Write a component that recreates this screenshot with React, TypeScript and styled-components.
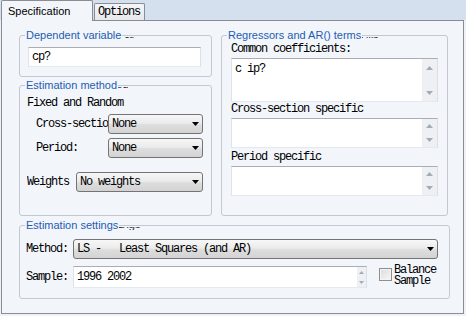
import React from 'react';
import styled, { createGlobalStyle } from 'styled-components';

const MONO = `"Liberation Mono", "Courier New", monospace`;
const SANS = `"Liberation Sans", Arial, sans-serif`;
const PANEL = '#F2F5FA';

const Global = createGlobalStyle`
  html, body { margin: 0; padding: 0; }
  body { width: 466px; height: 316px; overflow: hidden; background: #EEF1F6; }
`;

const Root = styled.div`
  width: 466px;
  height: 316px;
  background: #EEF1F6;
  display: flex;
  flex-direction: column;
`;

const TabBar = styled.div`
  height: 20px;
  background: #D5E0EF;
  display: flex;
  align-items: flex-end;
  position: relative;
  z-index: 2;
`;

const Tab = styled.div<{ $active?: boolean }>`
  box-sizing: border-box;
  border: 1px solid #898C95;
  border-bottom: none;
  border-radius: 2px 2px 0 0;
  white-space: nowrap;
  margin-left: 1px;
  color: #000;
  ${(p) =>
    p.$active
      ? `
    width: 92px;
    height: 21px;
    margin-bottom: -1px;
    background: ${PANEL};
    padding: 2px 0 0 6px;
    font: 11px/16px ${SANS};
  `
      : `
    width: 51px;
    height: 17px;
    background: linear-gradient(#F4F5F7, #E6E8EC);
    padding: 1px 0 0 3px;
    font: 12px/14px ${MONO};
    letter-spacing: -1.2px;
  `}
`;

const Panel = styled.div`
  box-sizing: border-box;
  margin-left: 1px;
  width: 463px;
  height: 294px;
  border: 1px solid #898C95;
  background: ${PANEL};
  padding: 14px 0 0 17px;
  display: flex;
  flex-direction: column;
  gap: 9px;
`;

const TopRow = styled.div`
  display: flex;
  gap: 9px;
  height: 181px;
`;

const Column = styled.div`
  display: flex;
  flex-direction: column;
  gap: 8px;
`;

const Group = styled.div<{ $w: number; $h: number; $pad: string }>`
  position: relative;
  box-sizing: border-box;
  width: ${(p) => p.$w}px;
  height: ${(p) => p.$h}px;
  flex: none;
  border: 1px solid #C3C8D1;
  border-radius: 3px;
  padding: ${(p) => p.$pad};
  display: flex;
  flex-direction: column;
`;

const Legend = styled.div`
  position: absolute;
  top: -8px;
  left: 5px;
  height: 14px;
  font: 11px/14px ${SANS};
`;

const LegendText = styled.div`
  position: relative;
  z-index: 1;
  padding: 0 1px;
  background: ${PANEL};
  font: 11px/14px ${SANS};
  color: #1E5CB3;
  white-space: nowrap;
`;

const LegendGhost = styled.div`
  position: absolute;
  left: 1px;
  top: 0;
  font: 12px/14px ${MONO};
  letter-spacing: -1.2px;
  color: #3A3A3A;
  white-space: nowrap;
  clip-path: inset(9px 0 2px 0);
`;

const Text = styled.div<{ $mt?: number; $lh?: number; $ml?: number }>`
  font: 12px/${(p) => p.$lh ?? 14}px ${MONO};
  letter-spacing: -1.2px;
  color: #000;
  white-space: pre;
  margin-top: ${(p) => p.$mt ?? 0}px;
  margin-left: ${(p) => p.$ml ?? 0}px;
`;

const FieldRow = styled.div<{ $indent?: number; $mt?: number; $align?: string }>`
  display: flex;
  align-items: ${(p) => p.$align ?? 'center'};
  min-height: 20px;
  padding-left: ${(p) => p.$indent ?? 0}px;
  margin-top: ${(p) => p.$mt ?? 0}px;
`;

const FieldLabel = styled.div<{ $w: number; $mt?: number }>`
  width: ${(p) => p.$w}px;
  flex: none;
  overflow: hidden;
  white-space: nowrap;
  font: 12px/14px ${MONO};
  letter-spacing: -1.2px;
  color: #000;
  margin-top: ${(p) => p.$mt ?? 0}px;
`;

const ComboBox = styled.div<{ $w: number }>`
  box-sizing: border-box;
  width: ${(p) => p.$w}px;
  height: 20px;
  flex: none;
  border: 1px solid #747474;
  border-radius: 3px;
  background: linear-gradient(#F7F7F7 0%, #EBEBEB 45%, #DDDDDD 55%, #D3D3D3 100%);
  display: flex;
  align-items: center;
  justify-content: space-between;
  padding: 0 3px 0 3px;
  font: 12px/14px ${MONO};
  letter-spacing: -1.2px;
  color: #000;
  white-space: pre;
`;

const TextInput = styled.div<{ $w: number; $h: number; $mt?: number }>`
  box-sizing: border-box;
  width: ${(p) => p.$w}px;
  height: ${(p) => p.$h}px;
  flex: none;
  margin-top: ${(p) => p.$mt ?? 0}px;
  border: 1px solid;
  border-color: #ABADB3 #DBDFE6 #E3E9EF #E2E3EA;
  background: #fff;
  display: flex;
  font: 12px/14px ${MONO};
  letter-spacing: -1.2px;
  color: #000;
`;

const InputText = styled.div<{ $pt: number }>`
  flex: 1;
  padding: ${(p) => p.$pt}px 0 0 3px;
  white-space: pre;
`;

const ScrollBar = styled.div<{ $w: number }>`
  width: ${(p) => p.$w}px;
  flex: none;
  background: #EEF0F4;
  display: flex;
  flex-direction: column;
  justify-content: space-between;
`;

const ScrollBtn = styled.div<{ $max: number }>`
  flex: 1 1 0;
  max-height: ${(p) => p.$max}px;
  display: flex;
  align-items: center;
  justify-content: center;
`;

const CheckBox = styled.div`
  box-sizing: border-box;
  width: 13px;
  height: 13px;
  flex: none;
  margin: 2px 0 0 12px;
  border: 1px solid #8E8F8F;
  background: linear-gradient(135deg, #DCDCDC, #F7F7F7);
  box-shadow: inset 0 0 0 1px #F4F4F4;
`;

const Arrow = ({ up, w, h, color }: { up?: boolean; w: number; h: number; color: string }) => (
  <svg width={w} height={h} viewBox={`0 0 ${w} ${h}`} style={{ display: 'block' }}>
    <polygon points={up ? `0,${h} ${w},${h} ${w / 2},0` : `0,0 ${w},0 ${w / 2},${h}`} fill={color} />
  </svg>
);

const Title = ({ children }: { children: string }) => (
  <Legend>
    <LegendGhost>{children}</LegendGhost>
    <LegendText>{children}</LegendText>
  </Legend>
);

const Combo = ({ w, value }: { w: number; value: string }) => (
  <ComboBox $w={w}>
    <span>{value}</span>
    <Arrow w={7} h={4} color="#000" />
  </ComboBox>
);

const Memo = ({ h, value = '', mt = 0 }: { h: number; value?: string; mt?: number }) => (
  <TextInput $w={207} $h={h} $mt={mt}>
    <InputText $pt={3}>{value}</InputText>
    <ScrollBar $w={15}>
      <ScrollBtn $max={17}>
        <Arrow up w={7} h={4} color="#A3ABB7" />
      </ScrollBtn>
      <ScrollBtn $max={17}>
        <Arrow w={7} h={4} color="#A3ABB7" />
      </ScrollBtn>
    </ScrollBar>
  </TextInput>
);

export default function App() {
  return (
    <Root>
      <Global />
      <TabBar>
        <Tab $active>Specification</Tab>
        <Tab>Options</Tab>
      </TabBar>
      <Panel>
        <TopRow>
          <Column>
            <Group $w={193} $h={42} $pad="11px 0 0 8px">
              <Title>Dependent variable</Title>
              <TextInput $w={173} $h={20}>
                <InputText $pt={2}>cp?</InputText>
              </TextInput>
            </Group>
            <Group $w={193} $h={131} $pad="10px 0 0 7px">
              <Title>Estimation method</Title>
              <Text>Fixed and Random</Text>
              <FieldRow $indent={9} $mt={4}>
                <FieldLabel $w={72}>Cross-section:</FieldLabel>
                <Combo w={95} value="None" />
              </FieldRow>
              <FieldRow $indent={9} $mt={4}>
                <FieldLabel $w={72}>Period:</FieldLabel>
                <Combo w={95} value="None" />
              </FieldRow>
              <FieldRow $mt={14}>
                <FieldLabel $w={49}>Weights</FieldLabel>
                <Combo w={127} value="No weights" />
              </FieldRow>
            </Group>
          </Column>
          <Group $w={227} $h={181} $pad="6px 0 0 9px">
            <Title>Regressors and AR() terms</Title>
            <Text>Common coefficients:</Text>
            <Memo h={44} value="c ip?" mt={2} />
            <Text>Cross-section specific</Text>
            <Memo h={30} mt={2} />
            <Text $mt={2}>Period specific</Text>
            <Memo h={30} mt={2} />
          </Group>
        </TopRow>
        <Group $w={431} $h={74} $pad="13px 0 0 6px">
          <Title>Estimation settings</Title>
          <FieldRow>
            <FieldLabel $w={47}>Method:</FieldLabel>
            <Combo w={365} value="LS -   Least Squares (and AR)" />
          </FieldRow>
          <FieldRow $mt={7} $align="flex-start">
            <FieldLabel $w={47} $mt={4}>Sample:</FieldLabel>
            <TextInput $w={294} $h={22}>
              <InputText $pt={3}>1996 2002</InputText>
              <ScrollBar $w={9}>
                <ScrollBtn $max={10}>
                  <Arrow up w={5} h={3} color="#A3ABB7" />
                </ScrollBtn>
                <ScrollBtn $max={10}>
                  <Arrow w={5} h={3} color="#A3ABB7" />
                </ScrollBtn>
              </ScrollBar>
            </TextInput>
            <CheckBox />
            <Text $lh={11} $ml={2} $mt={-1}>{'Balance\nSample'}</Text>
          </FieldRow>
        </Group>
      </Panel>
    </Root>
  );
}
